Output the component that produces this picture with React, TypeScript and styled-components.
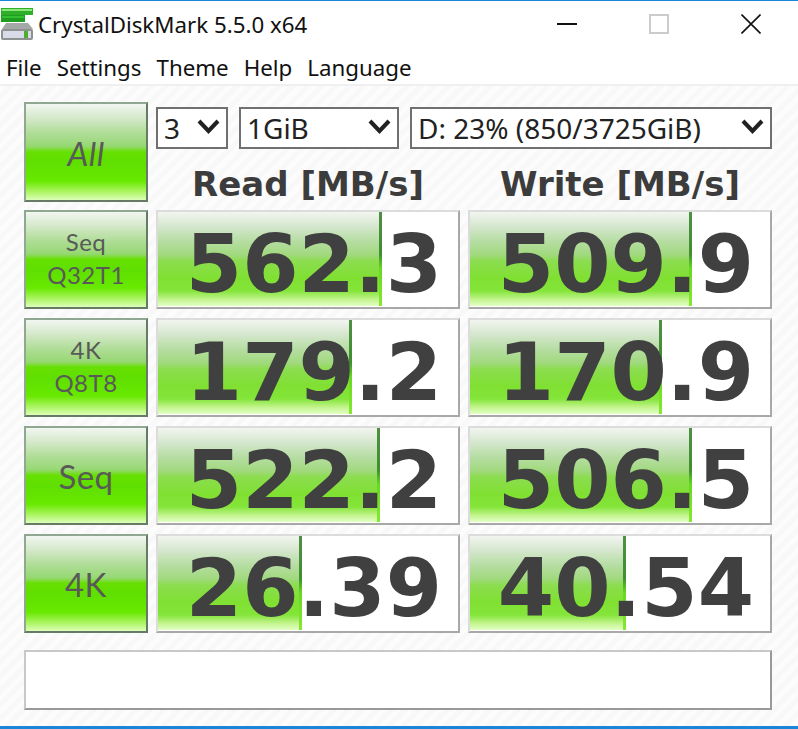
import React from 'react'
import styled, { createGlobalStyle } from 'styled-components'

const GlobalStyle = createGlobalStyle`
  html, body {
    margin: 0;
    padding: 0;
    background: #fff;
  }
`

const Window = styled.div`
  width: 798px;
  height: 729px;
  display: flex;
  flex-direction: column;
  overflow: hidden;
  background: #fff;
  font-family: 'Noto Sans', 'Open Sans', sans-serif;
`

const TitleBar = styled.div`
  height: 47px;
  flex: none;
  display: flex;
  align-items: center;
  border-top: 1px solid #1a86d9;
  color: #111;
`

const AppIcon = styled.svg`
  width: 33px;
  height: 33px;
  margin: -1px 0 0 1px;
  flex: none;
`

const TitleText = styled.div`
  flex: 1;
  margin-left: 4px;
  font-size: 22.3px;
  white-space: nowrap;
`

const Controls = styled.div`
  display: flex;
  align-items: center;
  width: 241px;
  justify-content: space-between;
  padding-right: 37px;
  margin-top: -2px;
  box-sizing: border-box;
`

const ControlIcon = styled.svg`
  width: 20px;
  height: 20px;
  flex: none;
`

const MenuBar = styled.nav`
  height: 34px;
  flex: none;
  display: flex;
  align-items: center;
  gap: 15px;
  padding: 2px 0 0 6px;
  font-size: 22.3px;
  color: #111;
  border-bottom: 2px solid #f0f0f0;
`

const MenuItem = styled.span`
  white-space: nowrap;
`

const Body = styled.main`
  flex: 1;
  padding: 16px 26px 0 24px;
  background: repeating-linear-gradient(135deg, #fcfcfc 0 5px, #f8f8f8 5px 10px);
  box-sizing: border-box;
`

const TopRow = styled.div`
  display: flex;
  gap: 8px;
  height: 100px;
  margin-bottom: 8px;
`

const glossGreen = `linear-gradient(180deg,
  #f2f6f1 0%, #d6e9cc 14%, #b0dd98 30%, #96d873 44%, #66e000 50%, #5fe000 62%, #68e900 80%, #a4f356 90%, #dcffb8 100%)`

const RunButton = styled.div`
  flex: none;
  width: 124px;
  box-sizing: border-box;
  display: flex;
  flex-direction: column;
  align-items: center;
  justify-content: center;
  border: 2px solid;
  border-color: #90a890 #667a66 #667a66 #90a890;
  background: ${glossGreen};
  font-family: 'Lato', sans-serif;
  color: #595959;
`

const ButtonLine = styled.span<{ $size: number; $italic?: boolean }>`
  font-size: ${({ $size }) => $size}px;
  font-style: ${({ $italic }) => ($italic ? 'italic' : 'normal')};
  line-height: 33px;
  letter-spacing: 0.5px;
  position: relative;
  top: ${({ $size }) => ($size > 30 ? 1 : -2)}px;
`

const HeaderColumn = styled.div`
  flex: 1;
  display: flex;
  flex-direction: column;
  padding-top: 5px;
`

const SelectRow = styled.div`
  display: flex;
  gap: 11px;
`

const Select = styled.div<{ $width: number }>`
  width: ${({ $width }) => $width}px;
  height: 42px;
  box-sizing: border-box;
  display: flex;
  align-items: center;
  justify-content: space-between;
  padding: 0 6px 0 6px;
  border: 2px solid #707070;
  background: #fff;
  font-size: 28px;
  color: #222;
  white-space: nowrap;
`

const Chevron = styled.svg`
  width: 23px;
  height: 15px;
  flex: none;
  margin-bottom: 3px;
`

const ColumnTitles = styled.div`
  display: grid;
  grid-template-columns: 304px 304px;
  gap: 8px;
  margin-top: 15px;
`

const ColumnTitle = styled.div`
  text-align: center;
  font-family: 'DejaVu Sans', sans-serif;
  font-weight: 700;
  font-size: 34px;
  line-height: 40px;
  color: #3c3c3c;
`

const Results = styled.div`
  display: grid;
  grid-template-columns: 124px 304px 304px;
  grid-auto-rows: 99px;
  column-gap: 8px;
  row-gap: 9px;
`

const Meter = styled.div`
  position: relative;
  box-sizing: border-box;
  border: 2px solid;
  border-color: #dcdcdc #a8a8a8 #a8a8a8 #dcdcdc;
  background: #fff;
  display: flex;
  align-items: center;
  justify-content: flex-end;
  padding-right: 16px;
`

const MeterFill = styled.div`
  position: absolute;
  left: 0;
  top: 0;
  bottom: 1px;
  box-sizing: border-box;
  border-right: 3px solid;
  border-image: linear-gradient(180deg, #4f8f45 0%, #3f8f30 45%, #68d820 60%, #86ea30 100%) 1;
  background: linear-gradient(180deg,
    #f2f5f0 0%, #d4e6cc 16%, #b4dda0 32%, #a0d97c 46%, #8cdd50 52%, #80e032 70%, #84e53a 84%, #c4f48e 93%, #e2ffc4 100%);
`

const Value = styled.span`
  position: relative;
  top: 5px;
  font-family: 'DejaVu Sans', sans-serif;
  font-weight: 700;
  font-size: 81px;
  line-height: 1;
  color: #404040;
`

const MessageBox = styled.div`
  margin-top: 17px;
  width: 748px;
  height: 60px;
  box-sizing: border-box;
  border: 2px solid;
  border-color: #c8c8c8 #999 #999 #c8c8c8;
  background: #fff;
`

const BottomEdge = styled.div`
  height: 3px;
  flex: none;
  background: #1a86d9;
`

type ResultRow = {
  label: string[]
  read: string
  readEnd: number
  write: string
  writeEnd: number
}

const rows: ResultRow[] = [
  { label: ['Seq', 'Q32T1'], read: '562.3', readEnd: 224, write: '509.9', writeEnd: 222 },
  { label: ['4K', 'Q8T8'], read: '179.2', readEnd: 194, write: '170.9', writeEnd: 192 },
  { label: ['Seq'], read: '522.2', readEnd: 222, write: '506.5', writeEnd: 222 },
  { label: ['4K'], read: '26.39', readEnd: 144, write: '40.54', writeEnd: 156 },
]

function DiskIcon() {
  return (
    <AppIcon viewBox="0 0 33 33">
      <path d="M5 15 L27 15 L32 21 L1 21 Z" fill="#a4a8a6" />
      <rect x="0" y="21" width="32" height="11" rx="2" fill="#8d918f" />
      <rect x="2" y="23" width="28" height="7" fill="#d9dce8" />
      <rect x="23" y="23" width="4" height="7" fill="#4caf2c" />
      <rect x="0" y="0" width="32" height="7" fill="#2fae2a" />
      <rect x="1" y="1" width="30" height="2" fill="#8ae87a" />
      <rect x="0" y="7" width="24" height="7" fill="#1f9d20" />
      <rect x="1" y="8" width="22" height="2" fill="#33c030" />
    </AppIcon>
  )
}

function ChevronIcon() {
  return (
    <Chevron viewBox="0 0 23 15">
      <path d="M2 2 L11.5 12 L21 2" fill="none" stroke="#222" strokeWidth="4" />
    </Chevron>
  )
}

export default function App() {
  return (
    <Window>
      <GlobalStyle />
      <TitleBar>
        <DiskIcon />
        <TitleText>CrystalDiskMark 5.5.0 x64</TitleText>
        <Controls>
          <ControlIcon viewBox="0 0 20 20">
            <rect x="0" y="9" width="20" height="2" fill="#111" />
          </ControlIcon>
          <ControlIcon viewBox="0 0 20 20">
            <rect x="1" y="1" width="18" height="18" fill="none" stroke="#ccc" strokeWidth="2" />
          </ControlIcon>
          <ControlIcon viewBox="0 0 20 20">
            <path d="M0.5 0.5 L19.5 19.5 M19.5 0.5 L0.5 19.5" stroke="#111" strokeWidth="1.6" />
          </ControlIcon>
        </Controls>
      </TitleBar>
      <MenuBar>
        <MenuItem>File</MenuItem>
        <MenuItem>Settings</MenuItem>
        <MenuItem>Theme</MenuItem>
        <MenuItem>Help</MenuItem>
        <MenuItem>Language</MenuItem>
      </MenuBar>
      <Body>
        <TopRow>
          <RunButton>
            <ButtonLine $size={33} $italic>All</ButtonLine>
          </RunButton>
          <HeaderColumn>
            <SelectRow>
              <Select $width={72}>3<ChevronIcon /></Select>
              <Select $width={160}>1GiB<ChevronIcon /></Select>
              <Select $width={362}>D: 23% (850/3725GiB)<ChevronIcon /></Select>
            </SelectRow>
            <ColumnTitles>
              <ColumnTitle>Read [MB/s]</ColumnTitle>
              <ColumnTitle>Write [MB/s]</ColumnTitle>
            </ColumnTitles>
          </HeaderColumn>
        </TopRow>
        <Results>
          {rows.map((row) => (
            <React.Fragment key={row.read}>
              <RunButton>
                {row.label.map((line) => (
                  <ButtonLine key={line} $size={row.label.length > 1 ? 24 : 33}>
                    {line}
                  </ButtonLine>
                ))}
              </RunButton>
              <Meter>
                <MeterFill style={{ width: row.readEnd }} />
                <Value>{row.read}</Value>
              </Meter>
              <Meter>
                <MeterFill style={{ width: row.writeEnd }} />
                <Value>{row.write}</Value>
              </Meter>
            </React.Fragment>
          ))}
        </Results>
        <MessageBox />
      </Body>
      <BottomEdge />
    </Window>
  )
}
